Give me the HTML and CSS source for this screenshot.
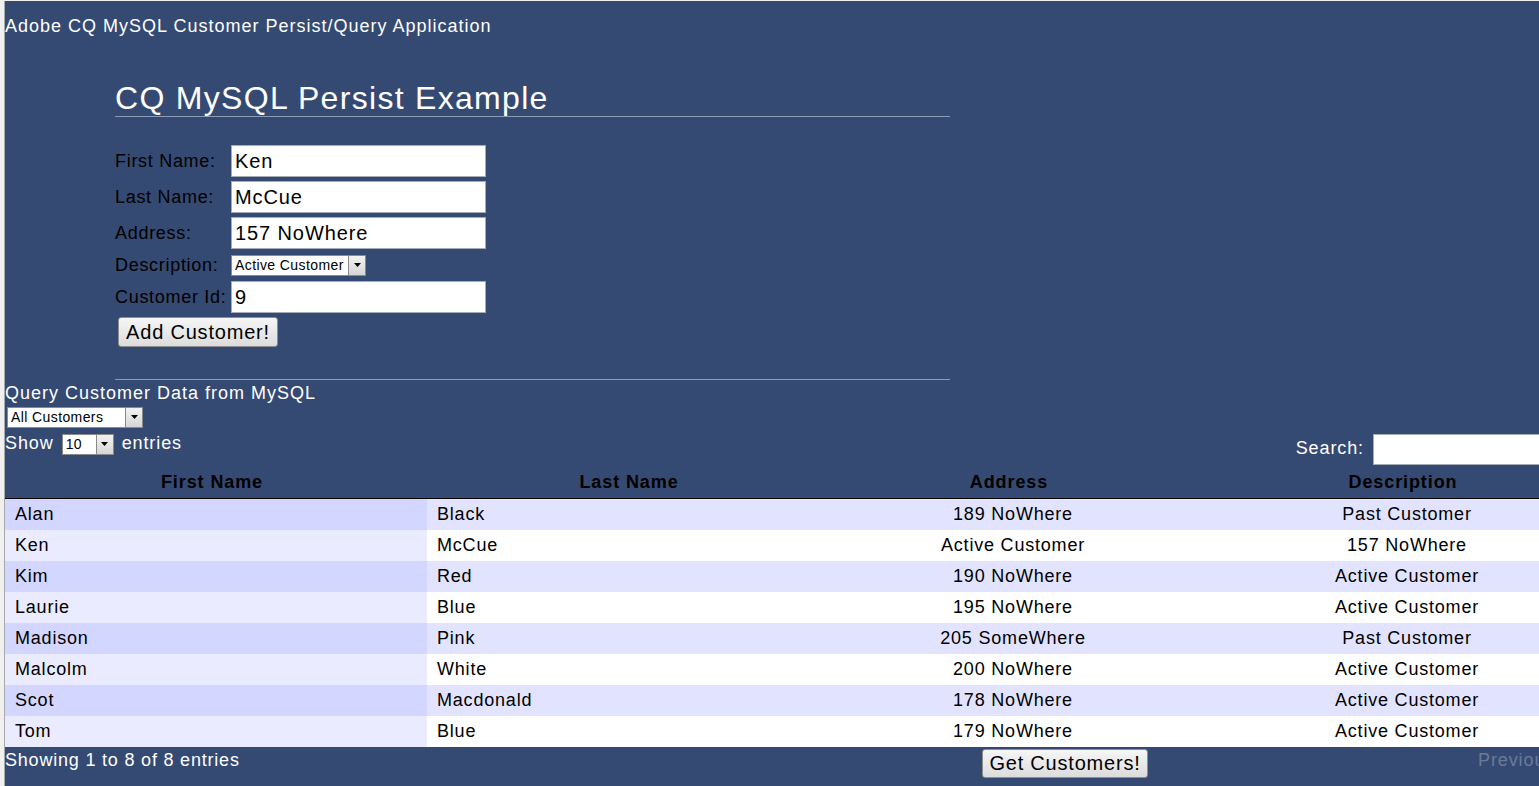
FILE: index.html
```html
<!DOCTYPE html>
<html>
<head>
<meta charset="utf-8">
<title>Adobe CQ MySQL Customer Persist/Query Application</title>
<link rel="stylesheet" href="styles.css">
</head>
<body>
<div class="app">
  <div class="app-title">Adobe CQ MySQL Customer Persist/Query Application</div>
  <div class="panel">
    <h1 class="heading">CQ MySQL Persist Example</h1>
    <div class="form">
      <label class="lbl">First Name:</label>
      <div class="field"><span class="input">Ken</span></div>
      <label class="lbl">Last Name:</label>
      <div class="field"><span class="input">McCue</span></div>
      <label class="lbl">Address:</label>
      <div class="field"><span class="input">157 NoWhere</span></div>
      <label class="lbl">Description:</label>
      <div class="field"><span class="select sel-desc"><span class="sel-text">Active Customer</span><span class="sel-btn"><svg width="7" height="4" viewBox="0 0 7 4"><path d="M0 0H7L3.5 4Z" fill="#000"/></svg></span></span></div>
      <label class="lbl">Customer Id:</label>
      <div class="field"><span class="input">9</span></div>
    </div>
    <button class="btn btn-add">Add Customer!</button>
    <div class="rule"></div>
  </div>
  <div class="query-title">Query Customer Data from MySQL</div>
  <div class="sel-row"><span class="select sel-all"><span class="sel-text">All Customers</span><span class="sel-btn"><svg width="7" height="4" viewBox="0 0 7 4"><path d="M0 0H7L3.5 4Z" fill="#000"/></svg></span></span></div>
  <div class="dt-top">
    <div class="dt-length">Show<span class="select sel-len"><span class="sel-text">10</span><span class="sel-btn"><svg width="7" height="4" viewBox="0 0 7 4"><path d="M0 0H7L3.5 4Z" fill="#000"/></svg></span></span>entries</div>
    <div class="dt-filter">Search:<span class="search-input"></span></div>
  </div>
  <table class="dt">
    <colgroup><col class="c1"><col class="c2"><col class="c3"><col class="c4"></colgroup>
    <thead>
      <tr><th>First Name</th><th>Last Name</th><th>Address</th><th>Description</th></tr>
    </thead>
    <tbody>
      <tr class="odd"><td>Alan</td><td>Black</td><td class="ctr">189 NoWhere</td><td class="ctr">Past Customer</td></tr>
      <tr class="even"><td>Ken</td><td>McCue</td><td class="ctr">Active Customer</td><td class="ctr">157 NoWhere</td></tr>
      <tr class="odd"><td>Kim</td><td>Red</td><td class="ctr">190 NoWhere</td><td class="ctr">Active Customer</td></tr>
      <tr class="even"><td>Laurie</td><td>Blue</td><td class="ctr">195 NoWhere</td><td class="ctr">Active Customer</td></tr>
      <tr class="odd"><td>Madison</td><td>Pink</td><td class="ctr">205 SomeWhere</td><td class="ctr">Past Customer</td></tr>
      <tr class="even"><td>Malcolm</td><td>White</td><td class="ctr">200 NoWhere</td><td class="ctr">Active Customer</td></tr>
      <tr class="odd"><td>Scot</td><td>Macdonald</td><td class="ctr">178 NoWhere</td><td class="ctr">Active Customer</td></tr>
      <tr class="even"><td>Tom</td><td>Blue</td><td class="ctr">179 NoWhere</td><td class="ctr">Active Customer</td></tr>
    </tbody>
  </table>
  <div class="dt-bottom">
    <div class="dt-info">Showing 1 to 8 of 8 entries</div>
    <button class="btn btn-get">Get Customers!</button>
    <div class="dt-paginate"><span class="pg-disabled">Previous</span> <span class="pg-disabled">Next</span></div>
  </div>
</div>
</body>
</html>
```
FILE: styles.css
```css
html, body {
  margin: 0;
  padding: 0;
  overflow: hidden;
}
body {
  background: #f0f0f0;
  padding: 1px 0 0 4px;
  font-family: "Liberation Sans", Arial, sans-serif;
  -webkit-font-smoothing: none;
}
.app {
  background: #354a72;
  border-left: 1px solid #a9a9a9;
  width: 1622px;
  min-height: 800px;
  color: #fff;
  font-size: 18px;
  letter-spacing: 0.9px;
}
.app-title {
  padding-top: 15px;
  line-height: 21px;
  font-size: 18px;
  letter-spacing: 1px;
}
.panel {
  margin-left: 110px;
  width: 835px;
}
.heading {
  margin: 0;
  padding-top: 43px;
  font-size: 32px;
  font-weight: normal;
  line-height: 36px;
  padding-bottom: 0;
  letter-spacing: 1.3px;
  border-bottom: 1px solid #8c9ab5;
}
.form {
  display: grid;
  grid-template-columns: 116px 255px;
  grid-template-rows: 32px 32px 32px 24px 32px;
  row-gap: 4px;
  margin-top: 28px;
  color: #000;
}
.lbl {
  display: flex;
  align-items: center;
  font-size: 18px;
  letter-spacing: 0.7px;
  white-space: nowrap;
}
.field {
  display: flex;
  align-items: center;
}
.input {
  box-sizing: border-box;
  display: flex;
  align-items: center;
  width: 255px;
  height: 32px;
  background: #fff;
  border: 1px solid #a5acb5;
  padding: 0 3px;
  font-size: 20px;
  letter-spacing: 0.9px;
  color: #000;
}
.select {
  box-sizing: border-box;
  display: inline-flex;
  align-items: center;
  height: 21px;
  background: #fff;
  border: 1px solid #8a8a8a;
  color: #000;
  font-size: 14px;
  letter-spacing: 0.4px;
  vertical-align: middle;
}
.sel-text {
  flex: 1;
  padding-left: 3px;
  line-height: 19px;
  white-space: nowrap;
}
.sel-btn {
  box-sizing: border-box;
  width: 17px;
  height: 19px;
  border-left: 1px solid #8a8a8a;
  background: linear-gradient(#f2f2f2, #d6d6d6);
  display: flex;
  align-items: center;
  justify-content: center;
}
.sel-desc {
  width: 135px;
}
.sel-all {
  width: 136px;
}
.sel-len {
  width: 52px;
  margin: 0 8px 0 8px;
}
.btn {
  box-sizing: border-box;
  font-family: "Liberation Sans", Arial, sans-serif;
  font-size: 20px;
  letter-spacing: 0.8px;
  color: #000;
  background: linear-gradient(#f6f6f6, #dcdcdc);
  border: 1px solid #8e8e8e;
  border-radius: 3px;
  padding: 0 4px;
  height: 30px;
}
.btn-add {
  display: block;
  margin: 4px 0 0 3px;
  width: 160px;
}
.rule {
  margin-top: 32px;
  border-top: 1px solid #8c9ab5;
}
.query-title {
  margin-top: 3px;
  line-height: 21px;
  font-size: 18px;
  letter-spacing: 1px;
}
.sel-row {
  padding: 2px 0 0 2px;
  height: 22px;
}
.dt-top {
  display: flex;
  justify-content: space-between;
  height: 34px;
  padding-top: 5px;
}
.dt-length {
  line-height: 21px;
}
.dt-filter {
  display: flex;
  align-items: flex-start;
  padding-top: 5px;
  line-height: 21px;
}
.search-input {
  box-sizing: border-box;
  display: inline-block;
  width: 254px;
  height: 31px;
  margin-left: 9px;
  margin-top: -4px;
  background: #fff;
  border: 1px solid #a5acb5;
}
.dt {
  width: 1622px;
  border-collapse: collapse;
  table-layout: fixed;
  font-size: 18px;
  letter-spacing: 0.8px;
  color: #000;
}
.c1 { width: 422px; }
.c2 { width: 412px; }
.c3 { width: 348px; }
.c4 { width: 440px; }
.dt th {
  padding: 3px 18px 3px 10px;
  font-weight: bold;
  line-height: 25px;
  letter-spacing: 0.9px;
  border-bottom: 1px solid #000;
  text-align: center;
}
.dt td {
  padding: 3px 10px;
  line-height: 25px;
  text-align: left;
}
.dt td.ctr {
  text-align: center;
}
.dt tr.odd td { background: #e2e4ff; }
.dt tr.odd td:first-child { background: #d3d6ff; }
.dt tr.even td { background: #ffffff; }
.dt tr.even td:first-child { background: #eaebff; }
.dt-bottom {
  display: flex;
  align-items: flex-start;
  padding-top: 3px;
}
.dt-info {
  width: 977px;
  line-height: 21px;
  letter-spacing: 0.8px;
}
.btn-get {
  width: 166px;
  height: 29px;
  margin-top: -1px;
}
.dt-paginate {
  margin-left: 330px;
  white-space: nowrap;
  color: #6b7a9a;
  font-size: 18px;
  line-height: 21px;
}
```
